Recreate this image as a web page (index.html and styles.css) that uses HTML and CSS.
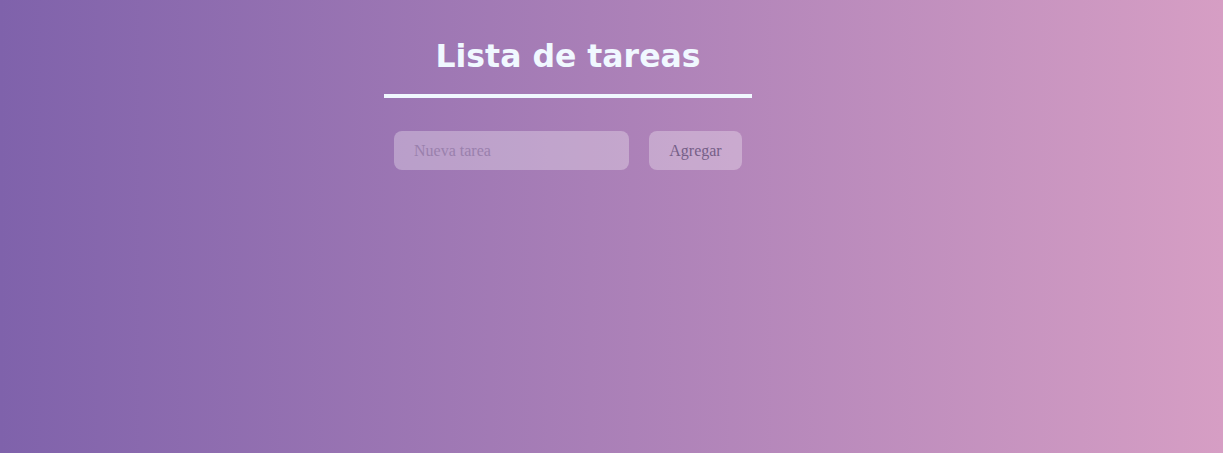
FILE: index.html
```html
<!DOCTYPE html>
<html lang="es">
<head>
<meta charset="utf-8">
<title>Lista de tareas</title>
<link rel="stylesheet" href="styles.css">
</head>
<body>
<div class="container">
  <h1 class="title">Lista de tareas</h1>
  <div class="form">
    <input class="task-input" type="text" placeholder="Nueva tarea">
    <button class="add-btn">Agregar</button>
  </div>
</div>
</body>
</html>
```
FILE: styles.css
```css
html, body {
  margin: 0;
  height: 100%;
}
body {
  background: linear-gradient(to right, #7f62ab, #d69ec4);
  font-family: "Liberation Serif", serif;
}
.container {
  width: 368px;
  margin-left: 384px;
  padding-top: 1px;
}
.title {
  font-family: "DejaVu Sans", sans-serif;
  font-weight: bold;
  font-size: 31.5px;
  color: #f0f8ff;
  text-align: center;
  margin: 37px 0 0;
  padding-bottom: 19px;
  border-bottom: 4px solid #f0f8ff;
  line-height: 37px;
}
.form {
  display: flex;
  gap: 20px;
  padding: 33px 10px 0;
}
.task-input {
  width: 235px;
  height: 39px;
  box-sizing: border-box;
  border: none;
  border-radius: 8px;
  background: rgba(255, 255, 255, 0.3);
  padding: 0 20px;
  font-family: "Liberation Serif", serif;
  font-size: 16px;
  color: #6c5280;
  outline: none;
}
.task-input::placeholder {
  color: #9a80ad;
}
.add-btn {
  width: 93px;
  height: 39px;
  border: none;
  border-radius: 8px;
  background: rgba(255, 255, 255, 0.3);
  font-family: "Liberation Serif", serif;
  font-size: 16px;
  color: #765f88;
}
```
